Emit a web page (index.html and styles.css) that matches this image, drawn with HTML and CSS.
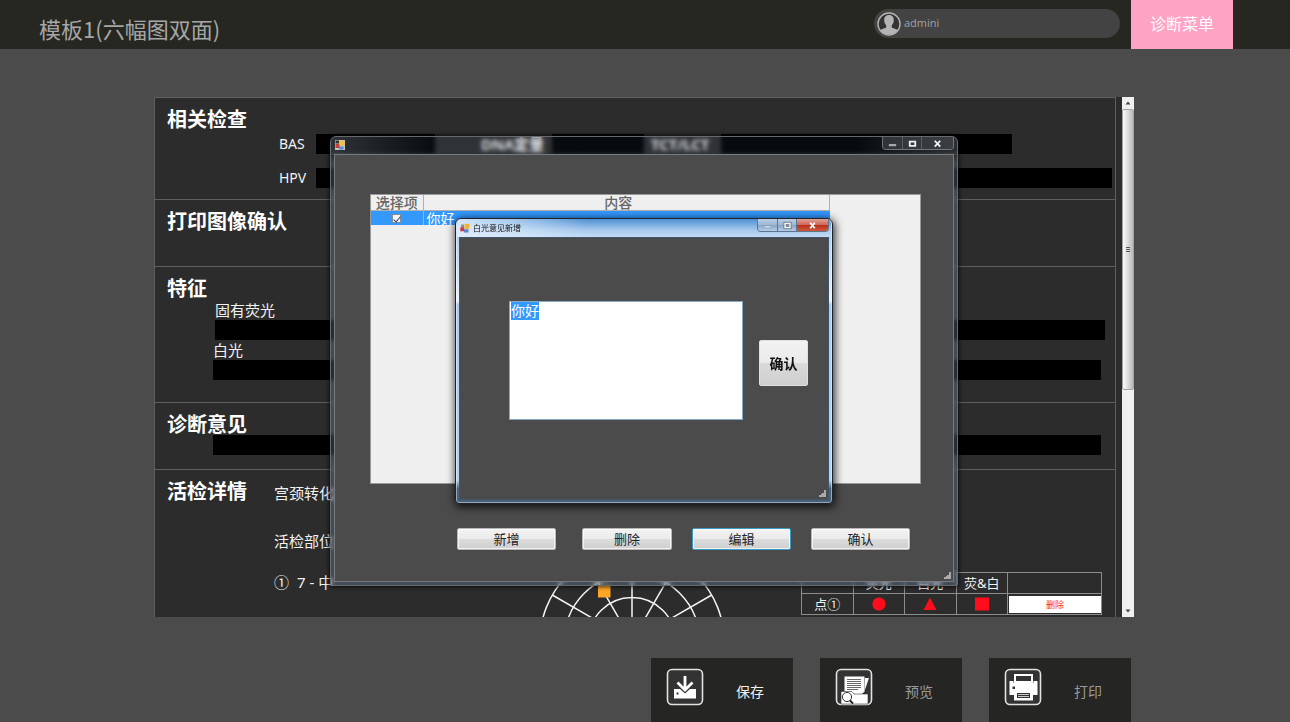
FILE: index.html
```html
<!DOCTYPE html>
<html lang="zh-CN">
<head>
<meta charset="utf-8">
<title>模板1(六幅图双面)</title>
<link rel="stylesheet" href="styles.css">
</head>
<body>
<header class="topbar">
  <h1 class="topbar-title">模板1(六幅图双面)</h1>
  <div class="user">
    <svg class="avatar" viewBox="0 0 24 24" aria-hidden="true">
      <circle cx="12" cy="12" r="11" fill="#333" stroke="#b4b4b4" stroke-width="1.4"/>
      <path d="M12 3c3.200 0 4.900 2.100 4.800 5.200 0 2.200-.9 3.900-2 5v2c.6 1.300 4.200 1.300 6 3A10.400 10.400 0 0 1 12 22.600a10.400 10.400 0 0 1-8.800-4.400c1.800-1.700 5.400-1.700 6-3v-2c-1.100-1.100-2-2.800-2-5C7.100 5.100 8.800 3 12 3z" fill="#b4b4b4"/>
    </svg>
    <span>admini</span>
  </div>
  <button class="menu-button" type="button">诊断菜单</button>
</header>

<main class="main">
  <div class="report">
    <div class="sections">
      <section class="section">
        <h2>相关检查</h2>
        <div class="exam-rows">
          <div class="exam-row exam-row-multi">
            <label for="bas">BAS</label><input class="field" id="bas">
            <label class="mid-label" for="dna">DNA定量</label><input class="field" id="dna">
            <label class="mid-label tct" for="tct">TCT/LCT</label><input class="field" id="tct">
          </div>
          <div class="exam-row">
            <label for="hpv">HPV</label><input class="field" id="hpv">
          </div>
        </div>
      </section>
      <section class="section section-images">
        <h2>打印图像确认</h2>
      </section>
      <section class="section section-features">
        <h2>特征</h2>
        <div class="stack stack-fluor">
          <label for="fluor">固有荧光</label><input class="field" id="fluor">
        </div>
        <div class="stack">
          <label for="white">白光</label><input class="field" id="white">
        </div>
      </section>
      <section class="section section-opinion">
        <h2 id="opinion-title">诊断意见</h2>
        <div class="stack"><input class="field" aria-labelledby="opinion-title"></div>
      </section>
      <section class="section section-biopsy">
        <h2>活检详情</h2>
        <div class="biopsy-text">
          <p>宫颈转化区</p>
          <p>活检部位</p>
          <p class="site"><span>①</span><span>7 - 中</span></p>
        </div>
        <svg class="dial" viewBox="0 0 186 186" aria-hidden="true">
          <g fill="none" stroke="#f4f4f4" stroke-width="1.500">
            <circle cx="93" cy="93" r="92"/>
            <circle cx="93" cy="93" r="67.500"/>
            <circle cx="93" cy="93" r="43.500"/>
            <path d="M93 1V185M47 13.300L139 172.700M139 13.300L47 172.700M13.300 47L172.700 139M172.700 47L13.300 139"/>
          </g>
          <path d="M59 37h12.500v12.500H59z" fill="#ffa726"/>
        </svg>
        <table class="points">
          <thead>
            <tr><th></th><th>荧光</th><th>白光</th><th>荧&amp;白</th><th class="wide"></th></tr>
          </thead>
          <tbody>
            <tr>
              <td>点①</td>
              <td><svg class="mark" viewBox="0 0 14 14"><circle cx="7" cy="7" r="6.600" fill="#ff0d1b"/></svg></td>
              <td><svg class="mark" viewBox="0 0 14 14"><path d="M7 0.500L13.500 13H.5z" fill="#ff0d1b"/></svg></td>
              <td><svg class="mark" viewBox="0 0 14 14"><path d="M0 .5h14v13H0z" fill="#ff0d1b"/></svg></td>
              <td><button class="row-delete" type="button">删除</button></td>
            </tr>
          </tbody>
        </table>
      </section>
    </div>
    <div class="scrollbar" aria-hidden="true">
      <svg class="arrow" viewBox="0 0 12 12"><path d="M3.500 7.500L6 4.500l2.500 3z" fill="#444"/></svg>
      <div class="thumb"><i></i><i></i><i></i></div>
      <svg class="arrow" viewBox="0 0 12 12"><path d="M3.500 4.500L6 7.500l2.500-3z" fill="#444"/></svg>
    </div>

    <div class="windows">
      <div class="window window-list" role="dialog" aria-label="内容">
        <div class="titlebar">
          <svg class="app-icon" viewBox="0 0 10 10" aria-hidden="true">
            <path d="M0 0h10v10H0z" fill="#c9c4be"/><path d="M.5 .5h3.500v3H.5z" fill="#333"/><path d="M.5 4h4v4h-4z" fill="#c93c3c"/><path d="M4.500 .8h5v4.700h-5z" fill="#f5c13c"/><path d="M4 6.500h4.500V9.500H4z" fill="#4c8ee0"/>
          </svg>
          <div class="caption">
            <button type="button" aria-label="最小化"><svg viewBox="0 0 12 12"><path d="M2 6.500h8v2.500H2z" fill="#a5a8aa"/></svg></button>
            <button type="button" aria-label="最大化"><svg viewBox="0 0 12 12"><path d="M3 4h6v4.500H3z" fill="none" stroke="#eee" stroke-width="2"/></svg></button>
            <button class="close" type="button" aria-label="关闭"><svg viewBox="0 0 12 12"><path d="M3 3l6 6.500M9 3l-6 6.500" stroke="#f2f2f2" stroke-width="2"/></svg></button>
          </div>
        </div>
        <div class="client">
          <div class="list">
            <table class="grid">
              <thead><tr><th class="pick">选择项</th><th class="sortable">内容</th></tr></thead>
              <tbody><tr><td class="pick"><input type="checkbox" checked aria-label="你好"></td><td>你好</td></tr></tbody>
            </table>
          </div>
          <div class="actions">
            <button class="push" type="button">新增</button>
            <button class="push narrow" type="button">删除</button>
            <button class="push active" type="button">编辑</button>
            <button class="push" type="button">确认</button>
          </div>
          <svg class="grip" viewBox="0 0 7 7" aria-hidden="true"><path d="M5 0h2v7H0V5h2V4h1V3h2z" fill="#aaa"/></svg>
        </div>
      </div>

      <div class="window window-edit" role="dialog" aria-labelledby="edit-title">
        <div class="titlebar">
          <svg class="app-icon" viewBox="0 0 10 10" aria-hidden="true">
            <path d="M1 1.500h3v3H1z" fill="#8d8d9a"/><path d="M.3 4.300h4v4h-4z" fill="#c93c3c"/><path d="M4.500 .8h5v5h-5z" fill="#f0b52c"/><path d="M4 6.200h4.500v3.300H4z" fill="#5c86c8"/>
          </svg>
          <span class="window-title" id="edit-title">白光意见新增</span>
          <div class="caption">
            <button type="button" aria-label="最小化"><svg viewBox="0 0 12 12"><path d="M2.500 6.500h7v2h-7z" fill="#dfe8f2" stroke="#8396ab" stroke-width=".5"/></svg></button>
            <button type="button" aria-label="最大化"><svg viewBox="0 0 12 12"><path d="M2 2.500h8v7H2z" fill="#f2f5f8" stroke="#55626f" stroke-width=".8"/><path d="M4.500 5h3v2h-3z" fill="#9fb3c8" stroke="#55626f" stroke-width=".8"/></svg></button>
            <button class="close" type="button" aria-label="关闭"><svg viewBox="0 0 12 12"><path d="M3.500 3l5 6M8.500 3l-5 6" stroke="#fff" stroke-width="2"/></svg></button>
          </div>
        </div>
        <div class="client">
          <textarea class="editor" id="editor" aria-label="白光意见" spellcheck="false">你好</textarea>
          <button class="confirm" type="button">确认</button>
          <svg class="grip" viewBox="0 0 7 7" aria-hidden="true"><path d="M5 0h2v7H0V5h2V4h1V3h2z" fill="#aaa"/></svg>
        </div>
      </div>
    </div>
  </div>
</main>

<footer class="toolbar">
  <button class="tool tool-primary" type="button">
    <svg viewBox="0 0 38 38" aria-hidden="true">
      <rect x="1.500" y="1.500" width="35" height="35" rx="4.500" fill="#333" stroke="#e2e2e2" stroke-width="1.600"/>
      <path d="M8 21h6l5 4.500 5-4.500h6v9.500H8z" fill="#fff"/><path d="M10.500 24.500h2v2h-2z" fill="#333"/>
      <path d="M19 8v14M11.500 14.500l7.500 7.500 7.500-7.500" fill="none" stroke="#fff" stroke-width="2.800"/>
    </svg>
    <span>保存</span>
  </button>
  <button class="tool" type="button">
    <svg viewBox="0 0 38 38" aria-hidden="true">
      <rect x="1.500" y="1.500" width="35" height="35" rx="4.500" fill="#333" stroke="#e2e2e2" stroke-width="1.600"/>
      <path d="M9.500 8.500h20v15l-3 3h-17z" fill="#fff"/><path d="M30 10h4l-4.500 13z" fill="#fff"/>
      <path d="M12 11.500h14M12 13.500h14M12 15.500h14M12 17.500h14M12 19.500h14M12 21.500h11" stroke="#444" stroke-width=".8"/>
      <path d="M6 23.500h11l2 2.500h14v10H6z" fill="#fff" stroke="#333" stroke-width=".6"/>
      <circle cx="12" cy="29" r="4.600" fill="#fff" stroke="#333" stroke-width="1"/><path d="M15 32.500l3 3" stroke="#222" stroke-width="1.800"/>
    </svg>
    <span>预览</span>
  </button>
  <button class="tool" type="button">
    <svg viewBox="0 0 38 38" aria-hidden="true">
      <rect x="1.500" y="1.500" width="35" height="35" rx="4.500" fill="#333" stroke="#e2e2e2" stroke-width="1.600"/>
      <path d="M11 7h17v7H11z" fill="#333" stroke="#fff" stroke-width="2"/>
      <path d="M5.500 13h4v2h20v-2h4v14h-5v-4.500h-18V27h-5z" fill="#fff"/><path d="M8.500 18.500h2.500v2.500H8.500z" fill="#333"/>
      <path d="M10 22h19v10.500H10z" fill="#fff"/><path d="M13 25h13v5H13z" fill="#333"/><path d="M14 26.500h11M14 28.500h11" stroke="#ddd" stroke-width=".9"/>
    </svg>
    <span>打印</span>
  </button>
</footer>
<script src="script.js"></script>
</body>
</html>
```
FILE: styles.css
```css
* { box-sizing: border-box; }

body {
  margin: 0;
  height: 100vh;
  display: flex;
  flex-direction: column;
  overflow: hidden;
  background: #4b4b4b;
  color: #f2f2f2;
  font-family: "Noto Sans", "Noto Sans CJK SC", sans-serif;
  font-size: 15px;
}

h1, h2, p { margin: 0; font-weight: 400; }
button, input, textarea { font-family: inherit; padding: 0; border: 0; border-radius: 0; }
button { cursor: pointer; }

/* Top bar */
.topbar {
  flex: none;
  display: flex;
  align-items: stretch;
  height: 49px;
  padding: 0 57px 0 39px;
  background: #272722;
}
.topbar-title {
  flex: 1;
  padding-top: 11px;
  color: #a6a6a6;
  font: 400 22px/34px "Noto Sans CJK SC", sans-serif;
}
.user {
  display: flex;
  gap: 3px;
  width: 246px;
  height: 29px;
  margin: 9px 11px 0 0;
  padding: 3px;
  border-radius: 15px;
  background: #434343;
  color: #a2a2a2;
  font: 11px/21px "Open Sans", sans-serif;
}
.avatar { width: 24px; height: 24px; }
.menu-button {
  width: 102px;
  padding-bottom: 4px;
  background: #ffa3c5;
  color: #fff;
  font-size: 16px;
}

/* Report */
.main {
  flex: 1;
  min-height: 0;
  padding: 48px 156px 41px 154px;
}
.report {
  position: relative;
  display: flex;
  height: 100%;
  background: #2c2c2c;
}
.sections {
  flex: 1;
  min-width: 0;
  overflow: hidden;
  margin-right: 6px;
  border: 1px solid #5f5f5f;
  border-bottom: 0;
}
.section {
  padding: 10px 0 0 12px;
  border-bottom: 1px solid #5f5f5f;
}
.section h2 {
  color: #fff;
  font: 700 20px/22px "Noto Sans CJK SC", sans-serif;
}
.section-images { padding-bottom: 34px; }
.section-features { padding-bottom: 22px; }
.section-opinion { padding-bottom: 14px; }
.field {
  display: block;
  width: 100%;
  min-width: 0;
  height: 20px;
  background: #000;
  color: #fff;
}
.exam-rows {
  display: grid;
  gap: 14px;
  padding: 4px 3px 11px 112px;
}
.exam-row {
  display: grid;
  grid-template-columns: 37px 1fr;
  line-height: 20px;
  font-size: 14px;
}
.exam-row-multi {
  grid-template-columns: 37px 119fr 117px 92fr 77px 291fr;
  margin-right: 100px;
}
.mid-label { padding-left: 46px; font-size: 15px; font-weight: 600; white-space: nowrap; }
.mid-label.tct { padding-left: 7px; }
.stack { padding: 0 14px 0 46px; line-height: 20px; }
.stack label { display: block; }
.stack-fluor { padding: 1px 10px 0 48px; }

.section-biopsy {
  display: grid;
  grid-template-columns: 107px 1fr 262px 301px;
  align-items: start;
  padding-right: 13px;
  border-bottom: 0;
}
.biopsy-text {
  display: grid;
  gap: 28px;
  padding-top: 3px;
  line-height: 20px;
}
.site { display: flex; gap: 8px; }
.biopsy-text .site { margin-top: -7px; }
.dial { width: 186px; height: 186px; margin-top: 68px; }
.points {
  margin-top: 92px;
  border-collapse: collapse;
  table-layout: fixed;
  width: 301px;
  font-size: 13px;
  line-height: 18px;
}
.points th, .points td {
  height: 21px;
  padding: 0;
  border: 1px solid #8c8c8c;
  font-weight: 400;
  text-align: center;
}
.points .wide { width: 94px; }
.mark { display: block; width: 14px; height: 14px; margin: 0 auto; }
.row-delete {
  display: block;
  width: 92px;
  height: 17px;
  margin-left: auto;
  background: #fff;
  color: #ff2a2a;
  font-size: 9px;
  line-height: 17px;
}

.scrollbar {
  display: flex;
  flex-direction: column;
  width: 12px;
  background: #f0f0f0;
}
.arrow { flex: none; width: 12px; height: 12px; }
.scrollbar .thumb {
  height: 54%;
  margin-bottom: auto;
  display: flex;
  flex-direction: column;
  align-items: center;
  justify-content: center;
  gap: 1px;
  border: 1px solid #a2a2a2;
  border-radius: 2px;
  background: linear-gradient(90deg, #fafafa, #dedede 45%, #b9b9bb);
}
.thumb i { width: 4px; height: 1px; background: #555; }

/* Floating windows */
.windows {
  position: absolute;
  inset: 0;
  display: grid;
  justify-items: center;
  align-items: start;
}
.window { position: relative; grid-area: 1 / 1; display: flex; flex-direction: column; }
.titlebar { display: flex; align-items: flex-start; }
.app-icon { flex: none; width: 10px; height: 10px; }
.caption { display: flex; margin-left: auto; }
.caption button {
  display: grid;
  place-items: center;
  width: 19px;
  height: 12px;
}
.caption svg { width: 11px; height: 11px; }
.client { position: relative; background: #4b4b4b; }
.grip { position: absolute; right: 2px; bottom: 2px; width: 7px; height: 7px; }

.window-list {
  width: 628px;
  margin-top: 39px;
  padding: 0 3px 3px;
  border: 1px solid #66696d;
  border-radius: 6px 6px 2px 2px;
  background:
    linear-gradient(90deg, rgba(150, 155, 160, .28), rgba(0, 0, 0, 0) 17%, rgba(0, 0, 0, 0) 84%, rgba(150, 155, 160, .24)) 0 0 / 100% 18px no-repeat,
    linear-gradient(rgba(110, 155, 205, .07) 18px, rgba(120, 150, 185, .3) 30px);
  backdrop-filter: blur(2px);
  box-shadow: 0 0 4px 1px rgba(0, 0, 0, .7);
}
.window-list .titlebar { height: 17px; }
.window-list .app-icon { margin: 3px 0 0 1px; }
.window-list .caption {
  border: 1px solid #73777a;
  border-top: 0;
  border-radius: 0 0 4px 4px;
}
.window-list .caption button { background: rgba(70, 74, 78, .6); }
.window-list .caption button + button { border-left: 1px solid #5c6063; }
.window-list .caption .close { width: 32px; }
.window-list .client {
  padding: 39px 32px 31px 35px;
  border: 1px solid #777b80;
}
.list {
  height: 290px;
  border: 1px solid #999;
  background: #efefef;
}
.grid {
  width: 459px;
  border-collapse: collapse;
  font: 14px/15px "Noto Sans CJK SC", sans-serif;
}
.grid th, .grid td { height: 15px; padding: 0; line-height: 15px; }
.grid th {
  border-right: 1px solid #b0b0b0;
  border-bottom: 1px solid #b0b0b0;
  color: #666;
  font-weight: 500;
}
.grid .sortable { padding-right: 16px; }
.grid td { height: 14px; padding-left: 3px; background: #3399ff; color: #fff; line-height: 14px; }
.grid .pick { width: 52px; padding: 0; border-right: 1px solid #b0b0b0; }
.grid input {
  appearance: none;
  position: relative;
  display: block;
  width: 9px;
  height: 9px;
  margin: 0 auto;
  border: 1px solid #8a8f94;
  background: #f4f4f4;
}
.grid input:checked::after {
  content: "";
  position: absolute;
  left: 2px;
  top: 0;
  width: 3px;
  height: 6px;
  border: solid #30456e;
  border-width: 0 1px 1px 0;
  transform: rotate(40deg);
}
.actions {
  display: grid;
  grid-template-columns: 99px 96px 99px 99px;
  gap: 20px;
  padding: 44px 0 0 87px;
}
.push {
  height: 22px;
  border: 1px solid #b8b8b8;
  border-radius: 2px;
  background: linear-gradient(#f3f3f3, #ebebeb 49%, #dcdcdc 50%, #cfcfcf);
  box-shadow: inset 0 0 0 1px rgba(255, 255, 255, .7);
  color: #222;
  font-size: 13px;
  line-height: 20px;
}
.push.narrow { width: 90px; justify-self: end; }
.push.active { border-color: #3b9cc6; }

.window-edit {
  width: 378px;
  margin-top: 121px;
  padding: 0 3px 3px;
  border: 1px solid #1c232b;
  border-radius: 6px 6px 4px 4px;
  background: linear-gradient(#b3d0ee 6%, #e9f2fc 29%, #a8cdf4 30%, #b0d2f5 92%, #4a6078 95%);
  box-shadow: inset 0 0 0 1px rgba(255, 255, 255, .45), 1px 2px 9px 1px rgba(0, 0, 0, .8);
}
.window-edit .titlebar {
  height: 18px;
  margin: 0 -2px;
  padding: 0 2px;
  border-radius: 5px 5px 0 0;
  background:
    linear-gradient(90deg, rgba(225, 238, 252, .9), rgba(225, 238, 252, .5) 18%, rgba(225, 238, 252, 0) 35%),
    linear-gradient(#4d8fd4, #a6c8ec 60%, #c3dbf5);
}
.window-edit .app-icon { margin: 4px 0 0 1px; }
.window-title {
  margin-left: 3px;
  color: #111;
  font: 8px/18px "Noto Sans CJK SC", sans-serif;
}
.window-edit .caption {
  overflow: hidden;
  border: 1px solid #5c7590;
  border-top: 0;
  border-radius: 0 0 4px 4px;
}
.window-edit .caption button { background: linear-gradient(#bccfe4, #9db6d2 50%, #86a5c7 51%, #b4cde8); }
.window-edit .caption button + button { border-left: 1px solid #5c7590; }
.window-edit .caption .close { width: 32px; background: linear-gradient(#e0a095, #cf6555 50%, #b92f1c 51%, #cf5a3c); }
.window-edit .client {
  display: flex;
  align-items: center;
  justify-content: space-between;
  padding: 63px 20px 79px 49px;
  border: 1px solid #40546a;
}
.editor {
  display: block;
  width: 234px;
  height: 119px;
  padding: 0 1px;
  border: 1px solid #86a9c8;
  outline: 0;
  resize: none;
  background: #fff;
  color: #222;
  font: 14px/16px "Noto Sans CJK SC", sans-serif;
}
.editor::selection { background: #3399ff; color: #fff; }
.confirm {
  width: 49px;
  height: 46px;
  margin-top: 5px;
  border: 1px solid #e0e0e0;
  border-radius: 2px;
  background: linear-gradient(#f3f3f3, #e9e9e9 49%, #dadada 50%, #cecece);
  color: #111;
  font-size: 14px;
  font-weight: 700;
}

/* Bottom toolbar */
.toolbar {
  flex: none;
  display: flex;
  justify-content: flex-end;
  gap: 27px;
  padding-right: 159px;
}
.tool {
  display: flex;
  align-items: flex-start;
  width: 142px;
  height: 64px;
  padding: 10px 15px;
  background: #252523;
  color: #9a9a9a;
  font-size: 14px;
}
.tool svg { width: 38px; height: 38px; }
.tool span { flex: 1; padding: 14px 0 0 18px; line-height: 20px; }
.tool-primary { color: #f2f2f2; }
```
FILE: script.js
```js
const editor = document.getElementById("editor");
editor.focus();
editor.select();
```
